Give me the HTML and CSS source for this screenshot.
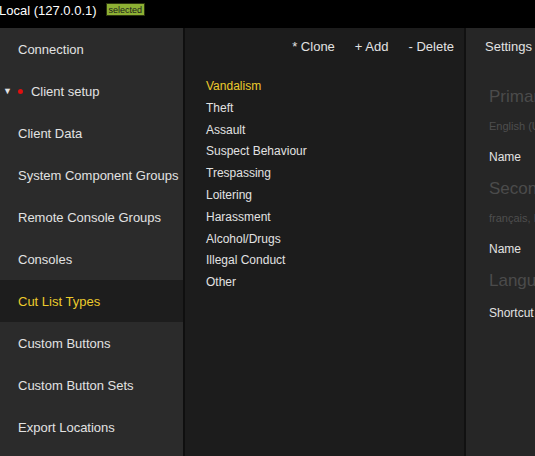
FILE: index.html
```html
<!DOCTYPE html>
<html lang="en">
<head>
  <meta charset="UTF-8" />
  <title>Client setup - Cut List Types</title>
  <link rel="stylesheet" href="styles.css">
</head>
<body>

  <header class="topbar">
    <span class="server">Local (127.0.0.1)</span>
    <span class="badge">selected</span>
  </header>

  <div class="main">
    <nav class="sidebar">
      <a href="#">Connection</a>
      <a href="#" class="group"><span class="caret">&#9660;</span><span class="dot"></span>Client setup</a>
      <a href="#">Client Data</a>
      <a href="#">System Component Groups</a>
      <a href="#">Remote Console Groups</a>
      <a href="#">Consoles</a>
      <a href="#" class="active">Cut List Types</a>
      <a href="#">Custom Buttons</a>
      <a href="#">Custom Button Sets</a>
      <a href="#">Export Locations</a>
    </nav>

    <section class="list-panel">
      <div class="toolbar">
        <a href="#">* Clone</a>
        <a href="#">+ Add</a>
        <a href="#">- Delete</a>
      </div>
      <ul class="types">
        <li class="current">Vandalism</li>
        <li>Theft</li>
        <li>Assault</li>
        <li>Suspect Behaviour</li>
        <li>Trespassing</li>
        <li>Loitering</li>
        <li>Harassment</li>
        <li>Alcohol/Drugs</li>
        <li>Illegal Conduct</li>
        <li>Other</li>
      </ul>
    </section>

    <section class="settings">
      <div class="settings-title">Settings</div>
      <h3>Primary Language</h3>
      <div class="lang">English (United States)</div>
      <div class="field">Name</div>
      <h3>Secondary Language</h3>
      <div class="lang">français, France</div>
      <div class="field">Name</div>
      <h3>Language Shortcut</h3>
      <div class="field">Shortcut</div>
    </section>
  </div>

</body>
</html>
```

FILE: styles.css
```css
body {
  margin: 0;
  font-family: 'Liberation Sans', Arial, sans-serif;
  color: #e2e2e2;
  background-color: #1c1c1c;
  height: 456px;
  overflow: hidden;
}

.topbar {
  background-color: #000;
  height: 28px;
  display: flex;
  align-items: center;
  gap: 9px;
}

.server {
  color: white;
  font-size: 13px;
  margin-left: -1px;
  padding-bottom: 8px;
}

.badge {
  background-color: #8db033;
  color: #1a1a1a;
  font-size: 9px;
  padding: 1px 2px 0;
  border: 1px solid #2c3510;
  margin-bottom: 9px;
}

.main {
  display: flex;
  height: 428px;
}

.sidebar {
  width: 183px;
  flex-shrink: 0;
  background-color: #2b2b2b;
  border-right: 2px solid #0f0f0f;
  display: flex;
  flex-direction: column;
}

.sidebar a {
  display: flex;
  align-items: center;
  height: 42px;
  padding-left: 18px;
  color: #e2e2e2;
  text-decoration: none;
  font-size: 13px;
}

.sidebar a.group {
  padding-left: 3px;
}

.caret {
  font-size: 9px;
  color: #e2e2e2;
  margin-right: 6px;
}

.dot {
  width: 5px;
  height: 5px;
  border-radius: 50%;
  background-color: #e01010;
  margin-right: 8px;
}

.sidebar a.active {
  background-color: #1d1d1d;
  color: #eccb2c;
}

.list-panel {
  width: 279px;
  flex-shrink: 0;
  background-color: #1c1c1c;
  border-right: 2px solid #111;
}

.toolbar {
  display: flex;
  justify-content: flex-end;
  gap: 20px;
  height: 37px;
  align-items: center;
  padding-right: 10px;
  font-size: 13px;
}

.toolbar a {
  color: #e2e2e2;
  text-decoration: none;
}

.types {
  list-style: none;
  margin: 11px 0 0;
  padding: 0 0 0 21px;
  font-size: 12px;
}

.types li {
  height: 21.8px;
  line-height: 21.8px;
}

.types li.current {
  color: #eccb2c;
}

.settings {
  flex: 1;
  background-color: #262626;
  padding-left: 19px;
  white-space: nowrap;
  overflow: hidden;
}

.settings-title {
  font-size: 13px;
  height: 37px;
  line-height: 37px;
}

.settings h3 {
  font-weight: normal;
  font-size: 17px;
  color: #4b4b4b;
  margin: 12.5px 0 0 4px;
  height: 24px;
  line-height: 24px;
}

.settings-title + h3 {
  margin-top: 20px;
}

.lang {
  font-size: 11px;
  color: #4e4e4e;
  margin: 9px 0 0 4px;
  height: 16px;
  line-height: 16px;
}

.field {
  font-size: 12px;
  color: #e2e2e2;
  margin: 15.5px 0 0 4px;
  height: 15px;
  line-height: 15px;
}

h3 + .field {
  margin-top: 12.5px;
}
```
